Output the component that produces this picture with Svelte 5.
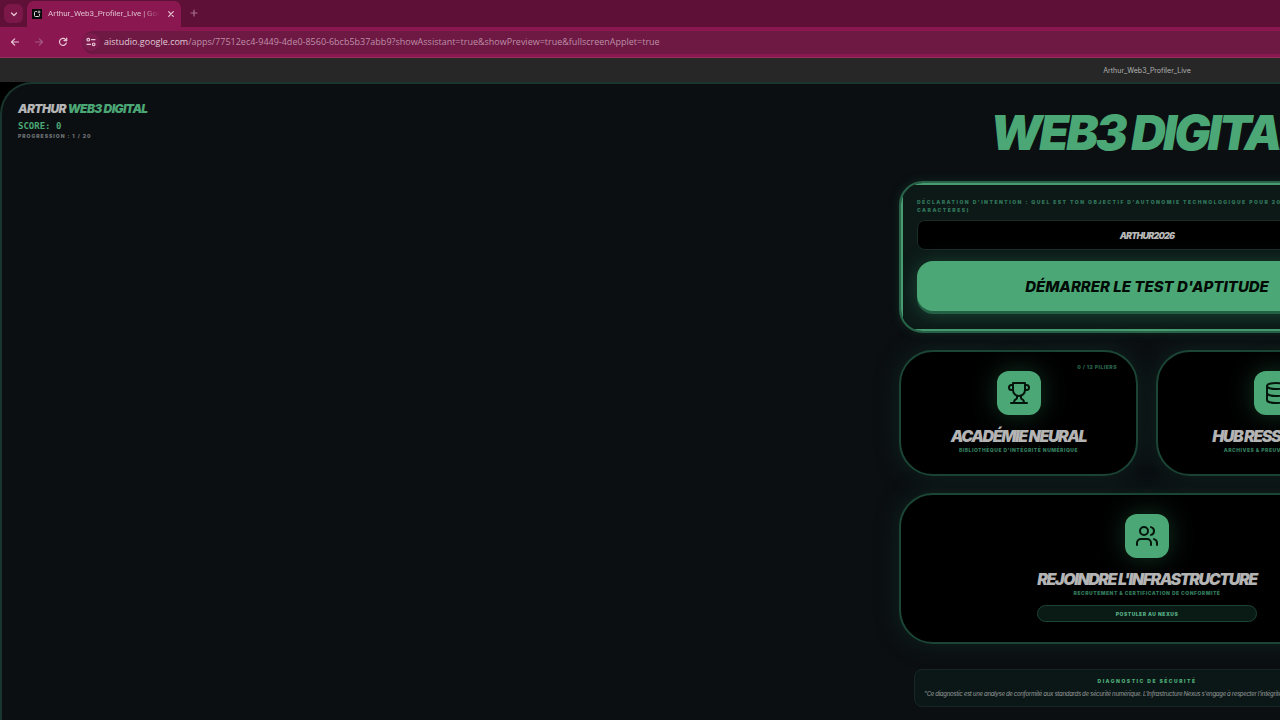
<script>
  let goal = $state('ARTHUR2026');
</script>

<div class="screen">
  <header class="browser">
    <div class="tabs">
      <button class="chevron" aria-label="Rechercher des onglets">
        <svg viewBox="0 0 10 10" width="10" height="10"><path d="M2.500 4 5 6.500 7.500 4" /></svg>
      </button>
      <div class="tab">
        <span class="favicon">
          <svg viewBox="0 0 10 10" width="10" height="10"><path d="M4.500 2.500H3.500a1 1 0 0 0-1 1v3a1 1 0 0 0 1 1h3a1 1 0 0 0 1-1V5.500" /><path class="spark" d="M7 1l.5 1.500L9 3l-1.500.5L7 5l-.5-1.500L5 3l1.500-.5z" /></svg>
        </span>
        <span class="tab-title">Arthur_Web3_Profiler_Live | Google AI Studio</span>
        <button class="close" aria-label="Fermer l'onglet">
          <svg viewBox="0 0 10 10" width="10" height="10"><path d="M2.700 2.700l4.600 4.600M7.300 2.700l-4.600 4.600" /></svg>
        </button>
      </div>
      <button class="new" aria-label="Nouvel onglet">
        <svg viewBox="0 0 10 10" width="10" height="10"><path d="M5 2v6M2 5h6" /></svg>
      </button>
    </div>
    <div class="toolbar">
      <button class="nav" aria-label="Précédent">
        <svg viewBox="0 0 10 10" width="10" height="10"><path d="M8.500 5H1.500M4.700 1.800 1.500 5 4.700 8.200" /></svg>
      </button>
      <button class="nav dim" aria-label="Suivant">
        <svg viewBox="0 0 10 10" width="10" height="10"><path d="M1.500 5h7M5.300 1.800 8.500 5 5.300 8.200" /></svg>
      </button>
      <button class="nav" aria-label="Actualiser">
        <svg viewBox="0 0 10 10" width="10" height="10"><path d="M8.300 6A3.500 3.500 0 1 1 7.500 2.500L8.500 3.500" /><path d="M8.700 1v2.700H6" /></svg>
      </button>
      <div class="address">
        <span class="site">
          <svg viewBox="0 0 10 10" width="10" height="10"><circle cx="2.300" cy="2.700" r="1.300" /><path d="M5.500 2.700h3.500M1 7.300h3.500" /><circle cx="7.700" cy="7.300" r="1.300" /></svg>
        </span>
        <span class="url"><b>aistudio.google.com</b>/apps/77512ec4-9449-4de0-8560-6bcb5b37abb9?showAssistant=true&amp;showPreview=true&amp;fullscreenApplet=true</span>
      </div>
    </div>
  </header>

  <div class="appbar">Arthur_Web3_Profiler_Live</div>

  <div class="backdrop">
    <div class="frame">
      <aside class="status">
        <p class="brand">ARTHUR <span>WEB3 DIGITAL</span></p>
        <p class="score">SCORE: 0</p>
        <p class="progress">PROGRESSION : 1 / 20</p>
      </aside>

      <main>
        <h1>WEB3 DIGITAL</h1>

        <form class="start" onsubmit={(e) => e.preventDefault()}>
          <label for="goal">DÉCLARATION D'INTENTION : QUEL EST TON OBJECTIF D'AUTONOMIE TECHNOLOGIQUE POUR 2026 ? (MIN 10 CARACTÈRES)</label>
          <input id="goal" type="text" bind:value={goal} />
          <button class="launch" type="submit">DÉMARRER LE TEST D'APTITUDE</button>
        </form>

        <div class="pair">
          <section class="card">
            <span class="badge">0 / 12 PILIERS</span>
            <span class="icon">
              <svg viewBox="0 0 24 24" width="24" height="24"><path d="M6 9H4.500a2.500 2.500 0 0 1 0-5H6" /><path d="M18 9h1.500a2.500 2.500 0 0 0 0-5H18" /><path d="M4 22h16" /><path d="M10 14.660V17c0 .55-.47.98-.97 1.210C7.850 18.750 7 20.240 7 22" /><path d="M14 14.660V17c0 .55.47.98.97 1.210C16.150 18.750 17 20.240 17 22" /><path d="M18 2H6v7a6 6 0 0 0 12 0V2Z" /></svg>
            </span>
            <h2>ACADÉMIE NEURAL</h2>
            <p>BIBLIOTHÈQUE D'INTÉGRITÉ NUMÉRIQUE</p>
          </section>
          <section class="card">
            <span class="icon">
              <svg viewBox="0 0 24 24" width="24" height="24"><ellipse cx="12" cy="5" rx="9" ry="3" /><path d="M3 5V19A9 3 0 0 0 21 19V5" /><path d="M3 12A9 3 0 0 0 21 12" /></svg>
            </span>
            <h2>HUB RESSOURCES</h2>
            <p>ARCHIVES &amp; PREUVES RÉSEAU DAO</p>
          </section>
        </div>

        <section class="card join">
          <span class="icon">
            <svg viewBox="0 0 24 24" width="24" height="24"><path d="M16 21v-2a4 4 0 0 0-4-4H6a4 4 0 0 0-4 4v2" /><circle cx="9" cy="7" r="4" /><path d="M22 21v-2a4 4 0 0 0-3-3.870" /><path d="M16 3.130a4 4 0 0 1 0 7.750" /></svg>
          </span>
          <h2>REJOINDRE L'INFRASTRUCTURE</h2>
          <p>RECRUTEMENT &amp; CERTIFICATION DE CONFORMITÉ</p>
          <button class="apply">POSTULER AU NEXUS</button>
        </section>

        <section class="notice">
          <h3>DIAGNOSTIC DE SÉCURITÉ</h3>
          <p>"Ce diagnostic est une analyse de conformité aux standards de sécurité numérique. L'Infrastructure Nexus s'engage à respecter l'intégrité de vos données."</p>
        </section>
      </main>
    </div>
  </div>
</div>

<style>
  :global(body) {
    margin: 0;
    overflow: hidden;
    background: #000;
  }
  :global(#app) {
    overflow: hidden;
  }
  * {
    box-sizing: border-box;
  }
  p, h1, h2, h3 {
    margin: 0;
  }
  button {
    padding: 0;
    border: 0;
    background: none;
    color: inherit;
    font: inherit;
    cursor: pointer;
  }
  svg {
    display: block;
    fill: none;
    stroke: currentColor;
    stroke-linecap: round;
    stroke-linejoin: round;
  }
  .screen {
    --green: #4ba775;
    width: calc(100vw + 1014px);
    min-height: 100vh;
    display: flex;
    flex-direction: column;
    font-family: Inter, sans-serif;
  }

  .browser {
    background: #8a1750;
    color: #e6c6d5;
    font-family: "Open Sans", sans-serif;
    border-bottom: 1px solid #93305f;
  }
  .browser svg {
    stroke-width: 1.2;
  }
  .tabs {
    display: flex;
    align-items: flex-end;
    height: 27px;
    background: #5e1037;
  }
  .chevron {
    width: 19px;
    height: 19px;
    margin: 0 4px 4px;
    display: grid;
    place-items: center;
    border-radius: 6px;
    background: #7c1749;
  }
  .tab {
    display: flex;
    align-items: center;
    width: 154px;
    height: 26px;
    padding: 0 5px;
    border-radius: 7px 7px 0 0;
    background: #8a1750;
  }
  .favicon {
    flex: none;
    background: #0a0a0a;
    color: #ddd;
  }
  .browser .favicon svg {
    stroke-width: 1;
  }
  .spark {
    fill: #ddd;
    stroke: none;
  }
  .tab-title {
    flex: 1;
    margin: 0 6px;
    overflow: hidden;
    white-space: nowrap;
    font-family: Roboto, sans-serif;
    font-size: 8px;
    line-height: 12px;
    color: #e0bfd0;
    mask-image: linear-gradient(90deg, #000 85%, transparent);
  }
  .new {
    margin: 0 0 9px 8px;
    color: #a9708c;
  }
  .toolbar {
    display: flex;
    align-items: center;
    height: 30px;
    padding-left: 10px;
    gap: 14px;
  }
  .nav.dim {
    color: #a35a80;
  }
  .address {
    flex: 1;
    display: flex;
    align-items: center;
    height: 23px;
    margin-right: 200px;
    gap: 4px;
    border-radius: 12px;
    background: #6d1943;
  }
  .site {
    display: grid;
    place-items: center;
    width: 18px;
    height: 18px;
    border-radius: 9px;
    background: #7c1b4d;
  }
  .url {
    font-size: 9px;
    line-height: 14px;
    color: #bf8ea7;
    white-space: nowrap;
  }
  .url b {
    font-weight: 400;
    color: #e3c8d6;
  }

  .appbar {
    height: 24px;
    padding-top: 1px;
    background: #272727;
    color: #b4b4b4;
    font-size: 7px;
    line-height: 23px;
    text-align: center;
  }

  .backdrop {
    flex: 1;
    display: flex;
    background: #000;
  }
  .frame {
    flex: 1;
    display: grid;
    grid-template-columns: 1fr 496px 1fr;
    border: 2px solid #19352d;
    border-bottom: 0;
    border-radius: 32px 32px 0 0;
    background: #0b0f12;
  }
  .status {
    padding: 18px 16px;
  }
  .brand {
    font-size: 12px;
    line-height: 14px;
    font-weight: 900;
    font-style: italic;
    letter-spacing: -0.05em;
    color: #b5b5b5;
  }
  .brand span {
    color: var(--green);
  }
  .score {
    margin-top: 4px;
    font-family: "DejaVu Sans Mono", monospace;
    font-size: 9px;
    line-height: 12px;
    font-weight: 700;
    color: var(--green);
  }
  .progress {
    font-size: 5px;
    line-height: 8px;
    font-weight: 900;
    letter-spacing: 0.2em;
    color: #6c7072;
  }

  main {
    display: flex;
    flex-direction: column;
    padding: 24px 0 13px;
  }
  h1 {
    text-align: center;
    white-space: nowrap;
    font-size: 48px;
    line-height: 50px;
    font-weight: 900;
    font-style: italic;
    letter-spacing: -0.06em;
    color: var(--green);
  }
  .start {
    position: relative;
    display: flex;
    flex-direction: column;
    margin-top: 23px;
    padding: 15px 16px 20px;
    overflow: hidden;
    border: 2px solid #28634a;
    border-radius: 24px;
    background: #0c1917;
    box-shadow: 0 0 8px #11291f;
  }
  .start::before {
    content: "";
    position: absolute;
    inset: 0;
    border: 2px solid #489c70;
    pointer-events: none;
  }
  label {
    font-size: 5px;
    line-height: 8px;
    font-weight: 900;
    letter-spacing: 0.3em;
    color: #32755a;
  }
  input {
    height: 30px;
    margin-top: 6px;
    border: 1px solid #1b2b26;
    border-radius: 8px;
    background: #000;
    color: #b8b8b8;
    text-align: center;
    font: italic 900 9px/12px Inter, sans-serif;
    letter-spacing: -0.09em;
  }
  .launch {
    height: 50px;
    margin-top: 11px;
    border-radius: 16px;
    background: var(--green);
    color: #020a05;
    font-size: 15px;
    font-weight: 800;
    font-style: italic;
    box-shadow: 0 3px 0 #236045, 0 3px 20px #1d4a38;
  }

  .pair {
    display: grid;
    grid-template-columns: 1fr 1fr;
    gap: 18px;
    margin: 17px 0;
  }
  .card {
    position: relative;
    display: flex;
    flex-direction: column;
    align-items: center;
    padding: 19px 16px 20px;
    border: 2px solid #1b4535;
    border-radius: 34px;
    background: #000;
    box-shadow: 0 0 22px #10231e;
  }
  .badge {
    position: absolute;
    top: 11px;
    right: 19px;
    font-size: 5px;
    line-height: 8px;
    font-weight: 900;
    letter-spacing: 0.1em;
    color: #28604a;
  }
  .icon {
    display: grid;
    place-items: center;
    width: 44px;
    height: 44px;
    border-radius: 12px;
    background: var(--green);
    color: #04150b;
    box-shadow: 0 0 26px #143626;
  }
  .icon svg {
    stroke-width: 2;
  }
  h2 {
    margin-top: 13px;
    white-space: nowrap;
    font-size: 16px;
    line-height: 16px;
    font-weight: 900;
    font-style: italic;
    letter-spacing: -0.09em;
    color: #b4b4b4;
  }
  .card p {
    margin-top: 2px;
    white-space: nowrap;
    font-size: 5px;
    line-height: 8px;
    font-weight: 900;
    letter-spacing: 0.1em;
    color: #32785a;
  }
  .apply {
    width: 220px;
    height: 17px;
    margin-top: 8px;
    border: 1px solid #1c4434;
    border-radius: 9px;
    background: #0a1a14;
    color: #55a982;
    font-size: 5px;
    line-height: 8px;
    font-weight: 900;
    letter-spacing: 0.1em;
  }

  .notice {
    margin: 25px 15px 0;
    padding: 7px 9px;
    border: 1px solid #172724;
    border-radius: 8px;
    background: #0b1716;
  }
  .notice h3 {
    text-align: center;
    font-size: 5px;
    line-height: 8px;
    font-weight: 900;
    letter-spacing: 0.3em;
    color: #4ba775;
  }
  .notice p {
    margin-top: 4px;
    white-space: nowrap;
    font-size: 6px;
    line-height: 10px;
    font-weight: 500;
    font-style: italic;
    letter-spacing: -0.05em;
    color: #858a8a;
  }
</style>
